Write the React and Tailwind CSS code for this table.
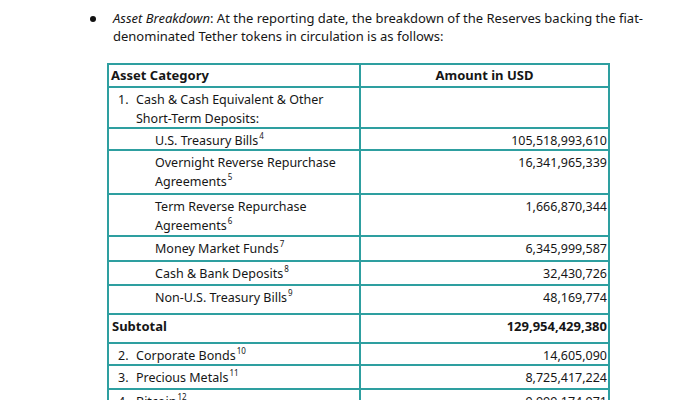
import React from "react";

function Sup({ children }) {
  return <span className="text-[8px] leading-none relative -top-[6px] ml-[1px]">{children}</span>;
}

function Row({ h, left, right, bold }) {
  return (
    <div className="flex border-b-2 border-[#2e9fa0]" style={{ height: h }}>
      <div className={`w-[252px] shrink-0 border-r-2 border-[#2e9fa0] px-[3px] pt-[2px] ${bold ? "font-bold text-[13px]" : ""}`}>
        {left}
      </div>
      <div className={`flex-1 text-right pr-[1px] pt-[2px] ${bold ? "font-bold text-[13px]" : ""}`}>{right}</div>
    </div>
  );
}

function Num({ n, children }) {
  return (
    <div className="flex pl-[6px]">
      <span className="w-[18px] shrink-0">{n}</span>
      <span>{children}</span>
    </div>
  );
}

function Ind({ children }) {
  return <div className="pl-[43px]">{children}</div>;
}

export default function App() {
  return (
    <div
      className="w-[700px] h-[400px] overflow-hidden bg-white text-[#161616] text-[12.5px] leading-[19px]"
      style={{ fontFamily: '"Noto Sans", sans-serif' }}
    >
      <div className="flex pt-[9px] pl-[90px]">
        <div className="w-[23px] shrink-0 pt-[7px]">
          <div className="w-[6px] h-[6px] rounded-full bg-[#111]" />
        </div>
        <p className="w-[560px] text-[13px] leading-[18px]">
          <i>Asset Breakdown</i>: At the reporting date, the breakdown of the Reserves backing the fiat-
          denominated Tether tokens in circulation is as follows:
        </p>
      </div>
      <div className="ml-[107px] mt-[18px] w-[503px] border-2 border-b-0 border-[#2e9fa0]">
        <div className="flex border-b-2 border-[#2e9fa0] h-[23px] font-bold text-[13px]">
          <div className="w-[252px] shrink-0 border-r-2 border-[#2e9fa0] px-[2px] pt-[1px] leading-[19px]">Asset Category</div>
          <div className="flex-1 text-center pt-[1px] leading-[19px]">Amount in USD</div>
        </div>
        <Row
          h={41}
          left={
            <Num n="1.">
              Cash &amp; Cash Equivalent &amp; Other
              <br />
              Short-Term Deposits:
            </Num>
          }
          right=""
        />
        <Row h={22} left={<Ind>U.S. Treasury Bills<Sup>4</Sup></Ind>} right="105,518,993,610" />
        <Row
          h={44}
          left={
            <Ind>
              Overnight Reverse Repurchase
              <br />
              Agreements<Sup>5</Sup>
            </Ind>
          }
          right="16,341,965,339"
        />
        <Row
          h={42}
          left={
            <Ind>
              Term Reverse Repurchase
              <br />
              Agreements<Sup>6</Sup>
            </Ind>
          }
          right="1,666,870,344"
        />
        <Row h={25} left={<Ind>Money Market Funds<Sup>7</Sup></Ind>} right="6,345,999,587" />
        <Row h={24} left={<Ind>Cash &amp; Bank Deposits<Sup>8</Sup></Ind>} right="32,430,726" />
        <Row h={29} left={<Ind>Non-U.S. Treasury Bills<Sup>9</Sup></Ind>} right="48,169,774" />
        <Row h={29} bold left="Subtotal" right="129,954,429,380" />
        <Row h={22} left={<Num n="2.">Corporate Bonds<Sup>10</Sup></Num>} right="14,605,090" />
        <Row h={24} left={<Num n="3.">Precious Metals<Sup>11</Sup></Num>} right="8,725,417,224" />
        <Row h={24} left={<Num n="4.">Bitcoin<Sup>12</Sup></Num>} right="9,999,174,971" />
      </div>
    </div>
  );
}
